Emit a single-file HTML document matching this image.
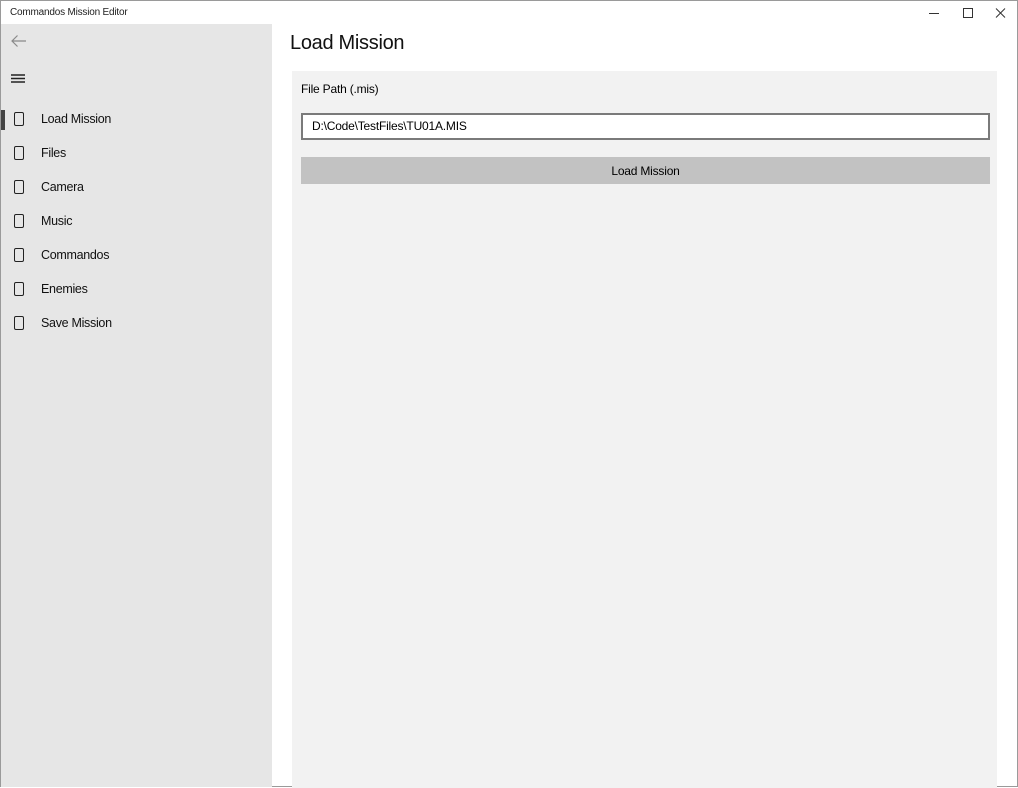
<!DOCTYPE html>
<html><head><style>
*{margin:0;padding:0;box-sizing:border-box}
body{width:1018px;height:787px;background:#fff;font-family:"Liberation Sans",sans-serif;position:relative;overflow:hidden;border:1px solid #9a9a9a;color:#000}
.abs{position:absolute}
.title{left:9px;top:6px;font-size:10px;color:#222;letter-spacing:-0.2px}
.side{left:0;top:23px;width:271px;height:763px;background:#e6e6e6}
.nav{position:absolute;left:40px;font-size:12.5px;color:#111;letter-spacing:-0.3px}
.ico{position:absolute;left:13px;width:10px;height:14px;border:1.3px solid #222;border-radius:2px}
.panel{left:291px;top:70px;width:705px;height:717px;background:#f2f2f2}
.panel div{letter-spacing:-0.2px}
</style></head><body>
<div class="abs title">Commandos Mission Editor</div>
<svg class="abs" style="left:925px;top:5px" width="85" height="14">
<line x1="3" y1="7.5" x2="13" y2="7.5" stroke="#333" stroke-width="1"/>
<rect x="37.5" y="2.5" width="9" height="9" fill="none" stroke="#333" stroke-width="1"/>
<path d="M70 2.5l9 9M79 2.5l-9 9" stroke="#333" stroke-width="1"/>
</svg>
<div class="abs side">
<svg class="abs" style="left:9px;top:10px" width="18" height="14"><path d="M16 7H2M7.5 1.5L2 7l5.5 5.5" fill="none" stroke="#8a8a8a" stroke-width="1.2"/></svg>
<svg class="abs" style="left:10px;top:50px" width="16" height="10"><path d="M0 1h14M0 4.5h14M0 8h14" stroke="#222" stroke-width="1.4"/></svg>
<div class="abs" style="left:0;top:86px;width:4px;height:20px;background:#444"></div>
<div class="ico" style="top:88px"></div><div class="nav" style="top:88px">Load Mission</div>
<div class="ico" style="top:122px"></div><div class="nav" style="top:122px">Files</div>
<div class="ico" style="top:156px"></div><div class="nav" style="top:156px">Camera</div>
<div class="ico" style="top:190px"></div><div class="nav" style="top:190px">Music</div>
<div class="ico" style="top:224px"></div><div class="nav" style="top:224px">Commandos</div>
<div class="ico" style="top:258px"></div><div class="nav" style="top:258px">Enemies</div>
<div class="ico" style="top:292px"></div><div class="nav" style="top:292px">Save Mission</div>
</div>
<div class="abs" style="left:289px;top:31px;font-size:20px;color:#111;letter-spacing:-0.3px">Load Mission</div>
<div class="abs panel">
<div class="abs" style="left:9px;top:11px;font-size:12px">File Path (.mis)</div>
<div class="abs" style="left:9px;top:42px;width:689px;height:27px;background:#fff;border:2px solid #7a7a7a;font-size:12px;padding:4px 0 0 9px">D:\Code\TestFiles\TU01A.MIS</div>
<div class="abs" style="left:9px;top:86px;width:689px;height:27px;background:#c2c2c2;font-size:12px;text-align:center;line-height:28px">Load Mission</div>
</div>
</body></html>
